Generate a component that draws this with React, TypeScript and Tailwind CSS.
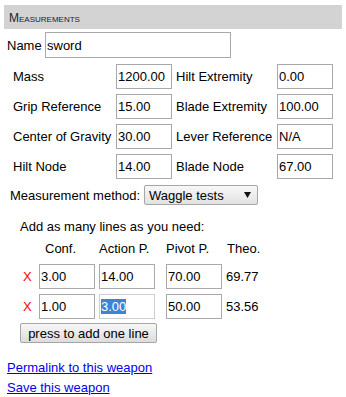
import React from "react";

const inputCls =
  "box-border border border-[#a9a9a9] bg-white h-[25px] w-[56px] px-[1px] flex items-center leading-[15px] whitespace-nowrap overflow-hidden";

function Field({ value }: { value: string }) {
  return <div className={inputCls}>{value}</div>;
}

function Label({ children }: { children: React.ReactNode }) {
  return <div className="leading-[15px] whitespace-nowrap">{children}</div>;
}

export default function App() {
  const measures: [string, string, string, string][] = [
    ["Mass", "1200.00", "Hilt Extremity", "0.00"],
    ["Grip Reference", "15.00", "Blade Extremity", "100.00"],
    ["Center of Gravity", "30.00", "Lever Reference", "N/A"],
    ["Hilt Node", "14.00", "Blade Node", "67.00"],
  ];
  return (
    <div className="w-[346px] h-[397px] bg-white pt-[5px] font-['Liberation_Sans',Arial,sans-serif] text-[13px] leading-[15px] text-black">
      <div className="ml-[4px] w-[338px] h-[24px] box-border bg-[#d3d3d3] pl-[5px] pt-[6px] text-[12px] leading-[15px] text-[#222] [font-variant:small-caps]">
        Measurements
      </div>

      <div className="mt-[3px] pl-[7px] flex items-center h-[26px]">
        <span className="w-[38px]">Name</span>
        <div className="box-border border border-[#a9a9a9] h-[26px] w-[186px] px-[1px] flex items-center">
          sword
        </div>
      </div>

      <div className="mt-[6px] pl-[13px] grid grid-cols-[103px_60px_101px_56px] gap-y-[5px] items-center">
        {measures.map((m) => (
          <React.Fragment key={m[0]}>
            <Label>{m[0]}</Label>
            <Field value={m[1]} />
            <Label>{m[2]}</Label>
            <Field value={m[3]} />
          </React.Fragment>
        ))}
      </div>

      <div className="mt-[6px] pl-[10px] flex items-center h-[20px]">
        <span className="w-[134px] whitespace-nowrap">Measurement method:</span>
        <div className="box-border w-[114px] h-[20px] border border-[#a6a6a6] rounded-[2px] bg-gradient-to-b from-[#f8f8f8] to-[#e2e2e2] flex items-center justify-between pl-[4px] pr-[6px]">
          <span>Waggle tests</span>
          <svg width="7" height="6" viewBox="0 0 7 6">
            <polygon points="0,0 7,0 3.5,6" fill="#111" />
          </svg>
        </div>
      </div>

      <div className="mt-[14px] pl-[20px]">Add as many lines as you need:</div>

      <div className="mt-[7px] pl-[20px]">
        <div className="grid grid-cols-[19px_60px_67px_60px_60px] h-[15px]">
          <div />
          <div className="pl-[6px]">Conf.</div>
          <div>Action P.</div>
          <div>Pivot P.</div>
          <div className="pl-[1px]">Theo.</div>
        </div>
        <div className="mt-[8px] grid grid-cols-[19px_60px_67px_60px_60px] gap-y-[5px] items-center">
          <div className="pl-[3px] text-[#ff0000]">X</div>
          <Field value="3.00" />
          <Field value="14.00" />
          <Field value="70.00" />
          <div>69.77</div>

          <div className="pl-[3px] text-[#ff0000]">X</div>
          <Field value="1.00" />
          <div className="box-border border border-[#cfcfcf] bg-white h-[25px] w-[56px] px-[1px] flex items-center">
            <span className="bg-[#3d84d6] text-white leading-[15px]">3.00</span>
          </div>
          <Field value="50.00" />
          <div>53.56</div>
        </div>
        <div className="mt-[4px] box-border w-[137px] h-[20px] border border-[#a6a6a6] rounded-[2px] bg-gradient-to-b from-[#f8f8f8] to-[#dcdcdc] flex items-center justify-center whitespace-nowrap">
          press to add one line
        </div>
      </div>

      <div className="mt-[17px] pl-[7px]">
        <a href="#" className="text-[#0000ee] underline">Permalink to this weapon</a>
      </div>
      <div className="mt-[5px] pl-[7px]">
        <a href="#" className="text-[#0000ee] underline">Save this weapon</a>
      </div>
    </div>
  );
}
